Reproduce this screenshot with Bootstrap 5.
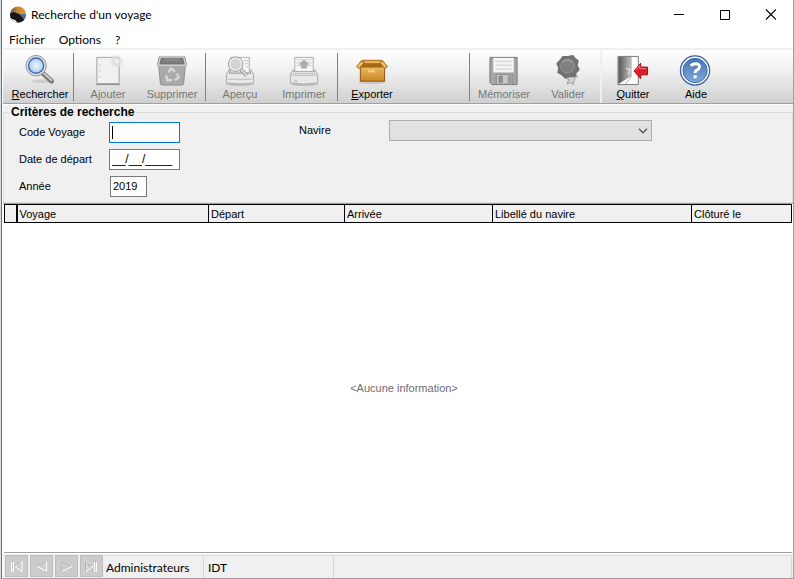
<!DOCTYPE html>
<html lang="fr">
<head>
<meta charset="utf-8">
<meta name="viewport" content="width=device-width, initial-scale=1">
<title>Recherche d'un voyage</title>
<link href="https://cdn.jsdelivr.net/npm/bootstrap@5.3.0/dist/css/bootstrap.min.css" rel="stylesheet">
<style>
body{font-family:"Liberation Sans",Arial,sans-serif;font-size:11px;line-height:14px;color:#000;background:#fff}
.app-window{border-left:1px solid #d5dde5;border-right:1px solid #a0a0a0;border-bottom:1px solid #a0a0a0}
.app-frame{border-left:1px solid #2880c8;padding-left:1px}
.seg{font-family:Lato,"Open Sans",sans-serif;font-size:12px;line-height:18px}
.title-row{height:30px;padding-left:6px}
.title-row button{width:46px;height:30px;padding:0;border:0;background:none;display:flex;align-items:center;justify-content:center}
.menu-row{height:20px;border-bottom:2px solid #f0f0f0;padding:2px 0 0 6px;gap:14px}
.menu-row a{color:#000;text-decoration:none}
.tool-row{height:54px;padding-left:5px;border-bottom:1px solid #a0a0a0;background:linear-gradient(#fff,#f0f0f0 40%,#d0d0d0)}
.tool{width:64px;padding:4px 0 0;border:0;background:none;color:#000;display:flex;flex-direction:column;align-items:center}
.tool svg{width:32px;height:33px;overflow:visible}
.tool:disabled{color:#777}
.tool-exit{border-left:2px solid #f0f0f0}
.tool-sep{width:1px;margin:3px 2px 2px 1px;background:#808080}
.tool-gap{width:64px}
.panel-area{background:#f0f0f0;border-top:1px solid #fff;border-bottom:1px solid #a0a0a0}
fieldset{border:1px solid #dcdcdc;padding:0 15px 5px}
legend{float:none;width:auto;font-size:12px;line-height:14px;font-weight:700;margin:0 0 0 -10px;padding:0 2px}
.field-col{display:grid;grid-template-columns:90px auto;row-gap:6px;align-items:center;width:280px;padding-top:3px}
.field-col label,.ship-row label{padding-bottom:2px}
.field-in{width:71px;height:21px;border:1px solid #7a7a7a;padding:0 2px 2px;font-size:11px;border-radius:0;background:#fff;color:#000;outline:0}
.field-active{border-color:#0078d7;background:linear-gradient(#000,#000) 2px 3px/1px 13px no-repeat #fff}
.field-date{font-size:12px}
.field-year{width:37px;margin-left:1px}
.ship-row{height:21px;margin-top:1px}
.ship-row label{width:90px}
.ship-select{width:263px;height:21px;border:1px solid #adadad;border-radius:0;appearance:none;opacity:1;background:#e1e1e1 url("data:image/svg+xml,%3Csvg xmlns='http://www.w3.org/2000/svg' width='10' height='6' viewBox='0 0 10 6'%3E%3Cpath d='M1 .8 5 4.8 9 .8' fill='none' stroke='%23555' stroke-width='1.3'/%3E%3C/svg%3E") right 3px center no-repeat}
.grid-wrap{margin:0 1px;border-bottom:1px solid #a0a0a0}
.result-grid{table-layout:fixed;width:100%;border-collapse:collapse}
.result-grid th{height:18px;padding:0 2px;border:1px solid #000;background:#f0f0f0;font-weight:400;line-height:16px;text-align:left}
.result-grid th:first-child{border-right-width:2px;padding:0}
.empty-note{color:#6d6d6d;padding-left:12px}
.foot-row{height:25px;background:#f0f0f0;border-top:1px solid #fff;gap:2px;padding:1px 1px 0 2px}
.nav-key{width:23px;height:22px;padding:0;border:1px solid #bebebe;background:#ccc;display:flex;align-items:center;justify-content:center}
.foot-panel{border-top:1px solid #dcdcdc;border-right:1px solid #d7d7d7;padding-left:1px;line-height:24px;height:23px}
.foot-role{width:99px}.foot-org{width:130px}
</style>
<script defer src="https://cdn.jsdelivr.net/npm/bootstrap@5.3.0/dist/js/bootstrap.bundle.min.js"></script>
</head>
<body>
<div class="app-window vh-100">
<div class="app-frame h-100 d-flex flex-column">
<header class="title-row seg d-flex align-items-center">
<svg width="18" height="18" viewBox="0 0 18 18" class="me-1" aria-hidden="true"><defs><linearGradient id="sky" x2="1"><stop stop-color="#3c4c68"/><stop offset=".45" stop-color="#c4852f"/><stop offset="1" stop-color="#e09a30"/></linearGradient><clipPath id="disc"><circle cx="9" cy="8.500" r="8"/></clipPath></defs><g clip-path="url(#disc)"><path d="M0 0h18v18H0z" fill="url(#sky)"/><path d="M8 8h10v10H8z" fill="#5c6f92"/><path d="M0 8 5 6 10 8 14 12 17 18H6L0 14Z" fill="#14161b"/><path d="M0 12 6 14 10 18H0Z" fill="#fff"/></g></svg>
<span class="me-auto">Recherche d'un voyage</span>
<button type="button" aria-label="Réduire"><svg width="12" height="12" viewBox="0 0 12 12"><path d="M2 5.500h10" stroke="#000"/></svg></button>
<button type="button" aria-label="Agrandir"><svg width="11" height="11" viewBox="0 0 11 11"><path d="M1.500.500h9v9h-9z" fill="none" stroke="#000"/></svg></button>
<button type="button" aria-label="Fermer"><svg width="12" height="12" viewBox="0 0 12 12"><path d="m2 .500 10 10M12 .500 2 10.500" stroke="#000" stroke-width="1.100"/></svg></button>
</header>
<nav class="menu-row seg d-flex align-items-center"><a href="#">Fichier</a><a href="#">Options</a><a href="#">?</a></nav>

<div class="tool-row d-flex" role="toolbar">
<button type="button" class="tool"><svg viewBox="0 0 32 34"><defs><radialGradient id="lens"><stop offset="0" stop-color="#eef6ff"/><stop offset="1" stop-color="#a9cdf3"/></radialGradient></defs><ellipse cx="18" cy="28" rx="11" ry="2" fill="#000" opacity=".1"/><path d="m19 20 9 8" stroke="#777" stroke-width="5" stroke-linecap="round"/><path d="m19 19 9 8" stroke="#ccc" stroke-width="2" stroke-linecap="round"/><circle cx="12" cy="12" r="10.500" fill="#e4e4e4" stroke="#8d8d8d"/><circle cx="12" cy="12" r="7.800" fill="url(#lens)" stroke="#3e6db3" stroke-width="1.500"/></svg><span><u>R</u>echercher</span></button>
<span class="tool-sep"></span>
<button type="button" class="tool" disabled><svg viewBox="0 0 32 34"><defs><radialGradient id="glow"><stop stop-color="#fff"/><stop offset=".4" stop-color="#ddd"/><stop offset="1" stop-color="#ddd" stop-opacity="0"/></radialGradient></defs><path d="M4.500 3.500h23v27h-23z" fill="#f1f1f1" stroke="#a0a0a0"/><path d="M4 31.500h24" stroke="#888"/><path d="M7.500 11v1m0 5v1m0 5v1" stroke="#999"/><circle cx="25" cy="7.500" r="7.500" fill="url(#glow)"/></svg><span>Ajouter</span></button>
<button type="button" class="tool" disabled><svg viewBox="0 0 32 34"><path d="M2 9h28l-2 21q0 2-2 2H6q-2 0-2-2Z" fill="#aaa" stroke="#8a8a8a"/><path d="M3 2.500h26l2 9H1Z" fill="#777" stroke="#8c8c8c"/><path d="M4 3 2 11.500h28L28 3Z" fill="none" stroke="#d0d0d0" stroke-width="1.500"/><path d="m6 8 2-4h16l2 4" fill="#858585"/><g fill="none" stroke="#d6d6d6" stroke-width="2.500"><path d="m12 19 3-4 4 3M21 20l2 4-4 3M16 27h-5l-1-5"/></g></svg><span>Supprimer</span></button>
<span class="tool-sep"></span>
<button type="button" class="tool" disabled><svg viewBox="0 0 32 34"><ellipse cx="16" cy="31" rx="14" ry="2" fill="#888" opacity=".4"/><path d="M6.500 3.500h19v16h-19z" fill="#f7f7f7" stroke="#aaa"/><path d="M20 7h4m-3 3h3m-2 3h2" stroke="#bbb"/><path d="M5 16 2 21v9q14 2 28 0v-9l-3-5v4H5Z" fill="#e8e8e8" stroke="#aaa"/><path d="M3 26h26" stroke="#bbb"/><path d="m16 15 7 7" stroke="#999" stroke-width="4"/><path d="m17 16 6 6" stroke="#ddd" stroke-width="2"/><circle cx="11.500" cy="10.500" r="6.500" fill="#d3d3d3" stroke="#eee" stroke-width="2"/><circle cx="11.500" cy="10.500" r="7.500" fill="none" stroke="#999"/></svg><span>Aperçu</span></button>
<button type="button" class="tool" disabled><svg viewBox="0 0 32 34"><ellipse cx="16" cy="31" rx="14" ry="2" fill="#888" opacity=".4"/><path d="M6.500 3.500h19v16h-19z" fill="#f7f7f7" stroke="#aaa"/><path d="M8 6h16M8 9h16M8 12h16" stroke="#ccc"/><path d="m16 6 6 5h-3v4h-6v-4h-3Z" fill="#aaa"/><path d="M5 16 2 21v9q14 2 28 0v-9l-3-5v2H5Z" fill="#e8e8e8" stroke="#aaa"/><path d="M3 22h26M5 20h22" stroke="#bbb"/><path d="M6 28h3" stroke="#999"/></svg><span>Imprimer</span></button>
<span class="tool-sep"></span>
<button type="button" class="tool"><svg viewBox="0 0 32 34"><defs><linearGradient id="box" x2="0" y2="1"><stop stop-color="#e9b560"/><stop offset="1" stop-color="#c98820"/></linearGradient></defs><ellipse cx="16" cy="29" rx="14" ry="2" fill="#888" opacity=".3"/><path d="M4 13.500h25V28H4Z" fill="url(#box)" stroke="#87530a"/><path d="M5 8h22l3 6H3Z" fill="#a9690f" stroke="#87530a"/><path d="m5 7-5 6 3 2 5-6Zm22 0 5 6-3 2-5-6Z" fill="#efbd68" stroke="#9b6214"/><path d="M6 6.500h20l-2 3.500H9Z" fill="#ecb255" stroke="#a86c18"/><path d="M5 14.500h23" stroke="#f8cf80"/><path d="M12 16h7v3h-7z" fill="#f5cb7c"/></svg><span><u>E</u>xporter</span></button>
<span class="tool-gap"></span>
<span class="tool-sep"></span>
<button type="button" class="tool" disabled><svg viewBox="0 0 32 34"><path d="M1.500 3.500h28v28h-26l-2-2Z" fill="#a6a6a6" stroke="#777"/><path d="M5 4h21v15H5z" fill="#f5f5f5"/><path d="M7 7.500h17M7 11.500h17M7 15.500h17" stroke="#ccc"/><path d="M8 21h17v10H8z" fill="#c6c6c6" stroke="#888"/><path d="M11 23h3v6h-3z" fill="#999" stroke="#777"/><path d="M20 22h4v8h-4z" fill="#999"/></svg><span>Mémoriser</span></button>
<button type="button" class="tool" disabled><svg viewBox="0 0 32 34"><path d="m14 22-1 3 4 1-2 5 4-2 2 3 2-7 3-2-5-4Z" fill="#d5d5d5" stroke="#999"/><path d="m11 3 5 0 5-1 2 3 3 2-1 5 2 4-3 3-1 4-5 0-5 1-3-3-4-2 1-5-2-4 3-3Z" fill="#747474" stroke="#707070" stroke-width="2" stroke-linejoin="round"/><circle cx="15.500" cy="12.500" r="7" fill="#808080" stroke="#959595"/><path d="M10 9q5-5 11 0" fill="none" stroke="#aaa"/></svg><span>Valider</span></button>
<button type="button" class="tool tool-exit"><svg viewBox="0 0 32 34"><defs><linearGradient id="door"><stop stop-color="#555"/><stop offset="1" stop-color="#c0c0c0"/></linearGradient></defs><path d="M.500 2.500h21v29H.500z" fill="#fff" stroke="#777"/><path d="M1 3h13v20L1 31Z" fill="url(#door)"/><path d="M14 3v21l-6 7" fill="none" stroke="#aaa"/><path d="m9 15 4 1-2 5" fill="none" stroke="#ddd" stroke-width="1.500"/><path d="m17 17.500 7-8v4h7v8h-7v4Z" fill="#dc1c28" stroke="#9c0c16"/><path d="m19 17 4-5v3h7" fill="none" stroke="#f77b80"/></svg><span><u>Q</u>uitter</span></button>
<button type="button" class="tool"><svg viewBox="0 0 32 34"><defs><linearGradient id="help" x2="0" y2="1"><stop stop-color="#4675b3"/><stop offset="1" stop-color="#80a7d7"/></linearGradient></defs><circle cx="15" cy="17" r="15" fill="#fff" stroke="#345f9f" stroke-width="1.300"/><circle cx="15" cy="17" r="12.500" fill="url(#help)" stroke="#3e69a8"/><path d="M10.500 12q4-3 7.500-1.500 3 2 .500 5-3.500 2-3.500 4" fill="none" stroke="#fff" stroke-width="3"/><path d="M13.500 22h3.200v3h-3.200z" fill="#fff"/></svg><span>Aide</span></button>
</div>

<main class="d-flex flex-column flex-grow-1">
<form class="panel-area">
<fieldset>
<legend>Critères de recherche</legend>
<div class="d-flex align-items-start">
<div class="field-col">
<label for="code">Code Voyage</label><input id="code" class="field-in field-active" type="text">
<label for="depart">Date de départ</label><input id="depart" class="field-in field-date" type="text" value="__/__/____">
<label for="annee">Année</label><input id="annee" class="field-in field-year" type="text" value="2019">
</div>
<div class="ship-row d-flex align-items-center"><label for="navire">Navire</label><select id="navire" class="ship-select" disabled><option></option></select></div>
</div>
</fieldset>
</form>
<div class="grid-wrap flex-grow-1 d-flex flex-column">
<table class="result-grid">
<colgroup><col style="width:12px"><col style="width:192px"><col style="width:136px"><col style="width:148px"><col style="width:199px"><col></colgroup>
<thead><tr><th aria-label="Sélection"></th><th>Voyage</th><th>Départ</th><th>Arrivée</th><th>Libellé du navire</th><th>Clôturé le</th></tr></thead>
</table>
<div class="empty-note flex-grow-1 d-flex align-items-center justify-content-center">&lt;Aucune information&gt;</div>
</div>
</main>

<footer class="foot-row d-flex">
<button type="button" class="nav-key" aria-label="Premier" disabled><svg width="13" height="11" viewBox="0 0 13 11" fill="none" stroke="#fff"><path d="M3.500 1v9M1.500.500v10h2M12 .500v10L5 5.500Z"/><path d="M1.500.500h2M11 .500 4 5" stroke="#aaa"/></svg></button>
<button type="button" class="nav-key" aria-label="Précédent" disabled><svg width="13" height="11" viewBox="0 0 13 11" fill="none" stroke="#fff"><path d="M11.500 1v9L2 5.500Z"/><path d="M11 1 2 5" stroke="#aaa"/></svg></button>
<button type="button" class="nav-key" aria-label="Suivant" disabled><svg width="13" height="11" viewBox="0 0 13 11" fill="none" stroke="#fff"><path d="M2.500 1v9L12 5.500Z"/><path d="M2 10V1l9 4" stroke="#aaa"/></svg></button>
<button type="button" class="nav-key" aria-label="Dernier" disabled><svg width="13" height="11" viewBox="0 0 13 11" fill="none" stroke="#fff"><path d="M1 .500v10L8 5.500ZM9.500 1v9M11.500.500v10h-2"/><path d="M.500 10V1L7 5M9.500.500h2" stroke="#aaa"/></svg></button>
<div class="d-flex flex-grow-1 seg">
<div class="foot-panel foot-role">Administrateurs</div><div class="foot-panel foot-org ps-1">IDT</div><div class="foot-panel flex-grow-1"></div>
</div>
</footer>
</div>
</div>
</body>
</html>
